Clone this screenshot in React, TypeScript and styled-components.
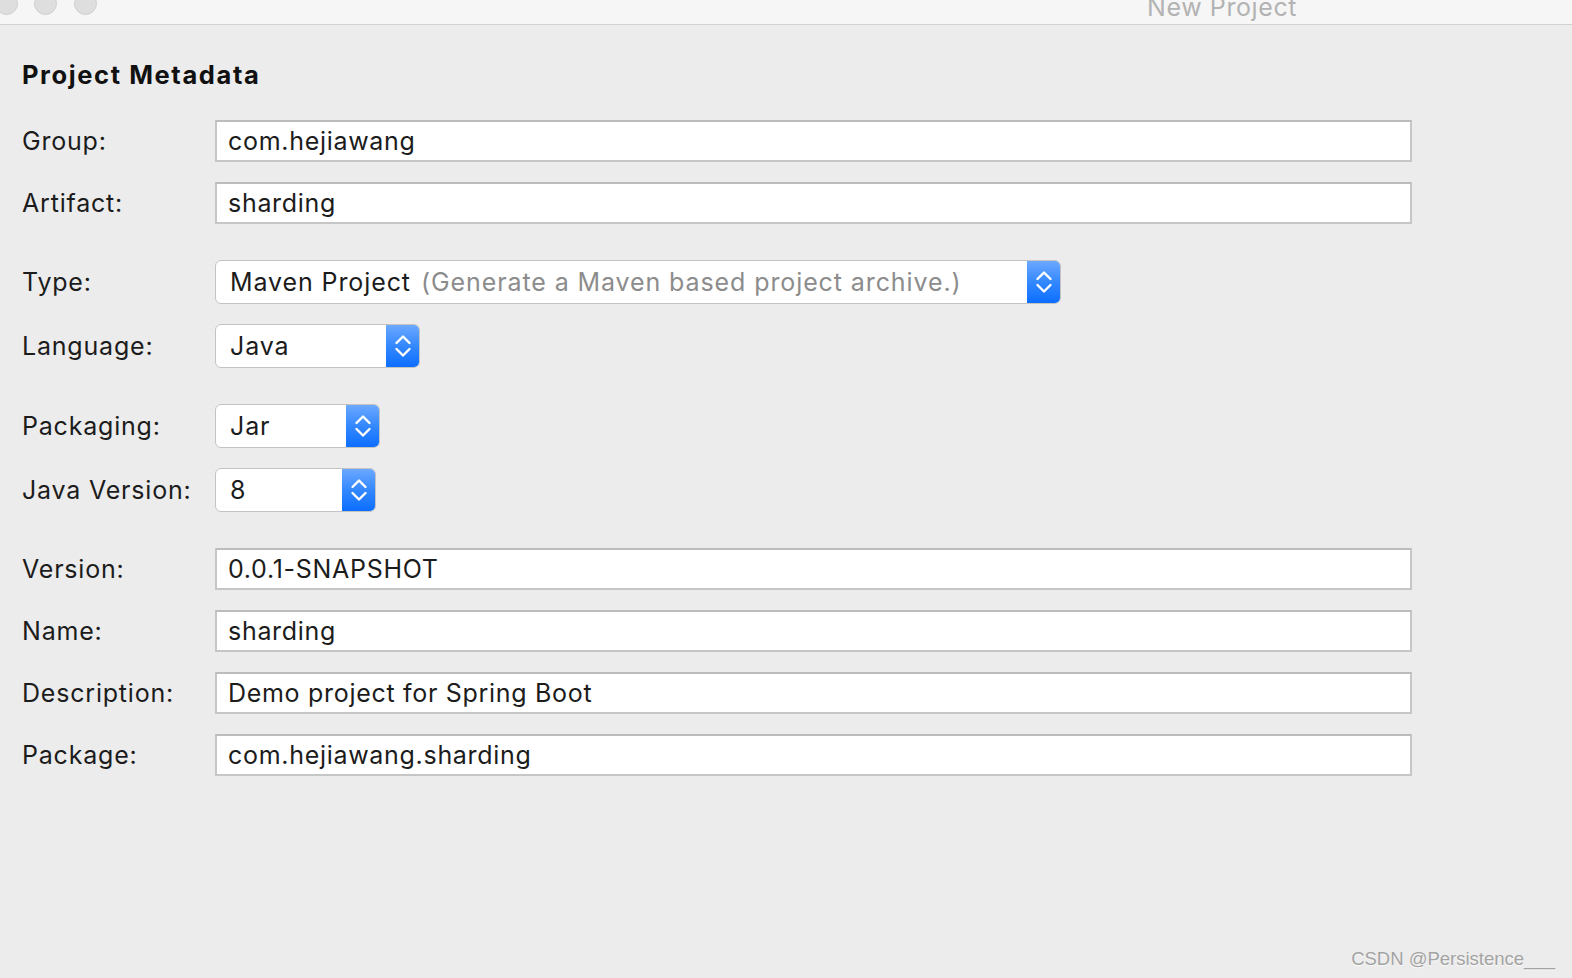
import React from "react";
import styled, { createGlobalStyle } from "styled-components";

const Global = createGlobalStyle`
  html, body { margin: 0; padding: 0; background: #ececec; overflow: hidden; }
  body { font-family: Inter, "Noto Sans", sans-serif; }
`;

const Window = styled.div`
  width: 1572px;
  height: 978px;
  background: #ececec;
  position: relative;
  overflow: hidden;
`;

const TitleBar = styled.div`
  height: 24px;
  background: #f6f6f6;
  border-bottom: 1px solid #d2d2d2;
  position: relative;
`;

const Light = styled.span<{ $x: number }>`
  position: absolute;
  top: -8px;
  left: ${(p) => p.$x - 12}px;
  width: 23px;
  height: 23px;
  border-radius: 50%;
  background: #dedede;
  border: 1px solid #d0d0d0;
  box-sizing: border-box;
`;

const Title = styled.div`
  position: absolute;
  left: 1147px;
  top: -6px;
  font-size: 25px;
  line-height: 26px;
  letter-spacing: 0.6px;
  color: #b3b3b3;
  white-space: nowrap;
`;

const Content = styled.div`
  padding: 35px 0 0 22px;
  display: flex;
  flex-direction: column;
`;

const Heading = styled.h1`
  margin: 0 0 30px 0;
  font-size: 25.5px;
  line-height: 30px;
  font-weight: 700;
  color: #111;
  letter-spacing: 1.6px;
`;

const Sections = styled.div`
  display: flex;
  flex-direction: column;
  gap: 36px;
`;

const Section = styled.div<{ $gap: number }>`
  display: flex;
  flex-direction: column;
  gap: ${(p) => p.$gap}px;
`;

const Row = styled.div`
  display: flex;
  align-items: center;
`;

const Label = styled.div`
  width: 193px;
  font-size: 25px;
  color: #1c1c1c;
  letter-spacing: 0.8px;
  white-space: nowrap;
`;

const TextField = styled.div`
  box-sizing: border-box;
  width: 1197px;
  height: 42px;
  background: #fff;
  border: 2px solid #c6c6c6;
  border-top-color: #bcbcbc;
  display: flex;
  align-items: center;
  padding-left: 11px;
  font-size: 25px;
  color: #1c1c1c;
  letter-spacing: 0.7px;
  white-space: nowrap;
`;

const Select = styled.div<{ $w: number }>`
  box-sizing: border-box;
  width: ${(p) => p.$w}px;
  height: 44px;
  background: #fff;
  border: 1px solid #c3c3c3;
  border-radius: 6px;
  display: flex;
  align-items: stretch;
  overflow: hidden;
`;

const SelectText = styled.div`
  flex: 1;
  display: flex;
  align-items: center;
  padding-left: 14px;
  font-size: 25px;
  color: #1c1c1c;
  letter-spacing: 0.9px;
  white-space: nowrap;
`;

const Hint = styled.span`
  color: #8c8c8c;
  margin-left: 10px;
`;

const Stepper = styled.div`
  width: 34px;
  background: linear-gradient(to bottom, #6eaaff 0%, #3488ff 50%, #0a6dff 100%);
  display: flex;
  align-items: center;
  justify-content: center;
  margin: -1px -1px -1px 0;
`;

const Watermark = styled.div`
  position: absolute;
  right: 17px;
  bottom: 8px;
  font-family: "Liberation Sans", Arial, sans-serif;
  font-size: 18.5px;
  color: #a3a3a3;
  text-shadow: 0 1px 1px rgba(255, 255, 255, 0.8);
  white-space: nowrap;
`;

const Chevrons = () => (
  <svg width="18" height="30" viewBox="0 0 18 30">
    <path d="M2.5 12 L9 5.5 L15.5 12" fill="none" stroke="#fff" strokeWidth="2.4" strokeLinecap="round" strokeLinejoin="round" />
    <path d="M2.5 18 L9 24.5 L15.5 18" fill="none" stroke="#fff" strokeWidth="2.4" strokeLinecap="round" strokeLinejoin="round" />
  </svg>
);

const Field = ({ label, value }: { label: string; value: string }) => (
  <Row>
    <Label>{label}</Label>
    <TextField>{value}</TextField>
  </Row>
);

const Dropdown = ({ label, value, hint, width }: { label: string; value: string; hint?: string; width: number }) => (
  <Row>
    <Label>{label}</Label>
    <Select $w={width}>
      <SelectText>
        {value}
        {hint && <Hint>{hint}</Hint>}
      </SelectText>
      <Stepper>
        <Chevrons />
      </Stepper>
    </Select>
  </Row>
);

export default function App() {
  return (
    <Window>
      <Global />
      <TitleBar>
        <Light $x={7} />
        <Light $x={46} />
        <Light $x={86} />
        <Title>New Project</Title>
      </TitleBar>
      <Content>
        <Heading>Project Metadata</Heading>
        <Sections>
          <Section $gap={20}>
            <Field label="Group:" value="com.hejiawang" />
            <Field label="Artifact:" value="sharding" />
          </Section>
          <Section $gap={20}>
            <Dropdown label="Type:" value="Maven Project" hint="(Generate a Maven based project archive.)" width={846} />
            <Dropdown label="Language:" value="Java" width={205} />
          </Section>
          <Section $gap={20}>
            <Dropdown label="Packaging:" value="Jar" width={165} />
            <Dropdown label="Java Version:" value="8" width={161} />
          </Section>
          <Section $gap={20}>
            <Field label="Version:" value="0.0.1-SNAPSHOT" />
            <Field label="Name:" value="sharding" />
            <Field label="Description:" value="Demo project for Spring Boot" />
            <Field label="Package:" value="com.hejiawang.sharding" />
          </Section>
        </Sections>
      </Content>
      <Watermark>CSDN @Persistence___</Watermark>
    </Window>
  );
}
